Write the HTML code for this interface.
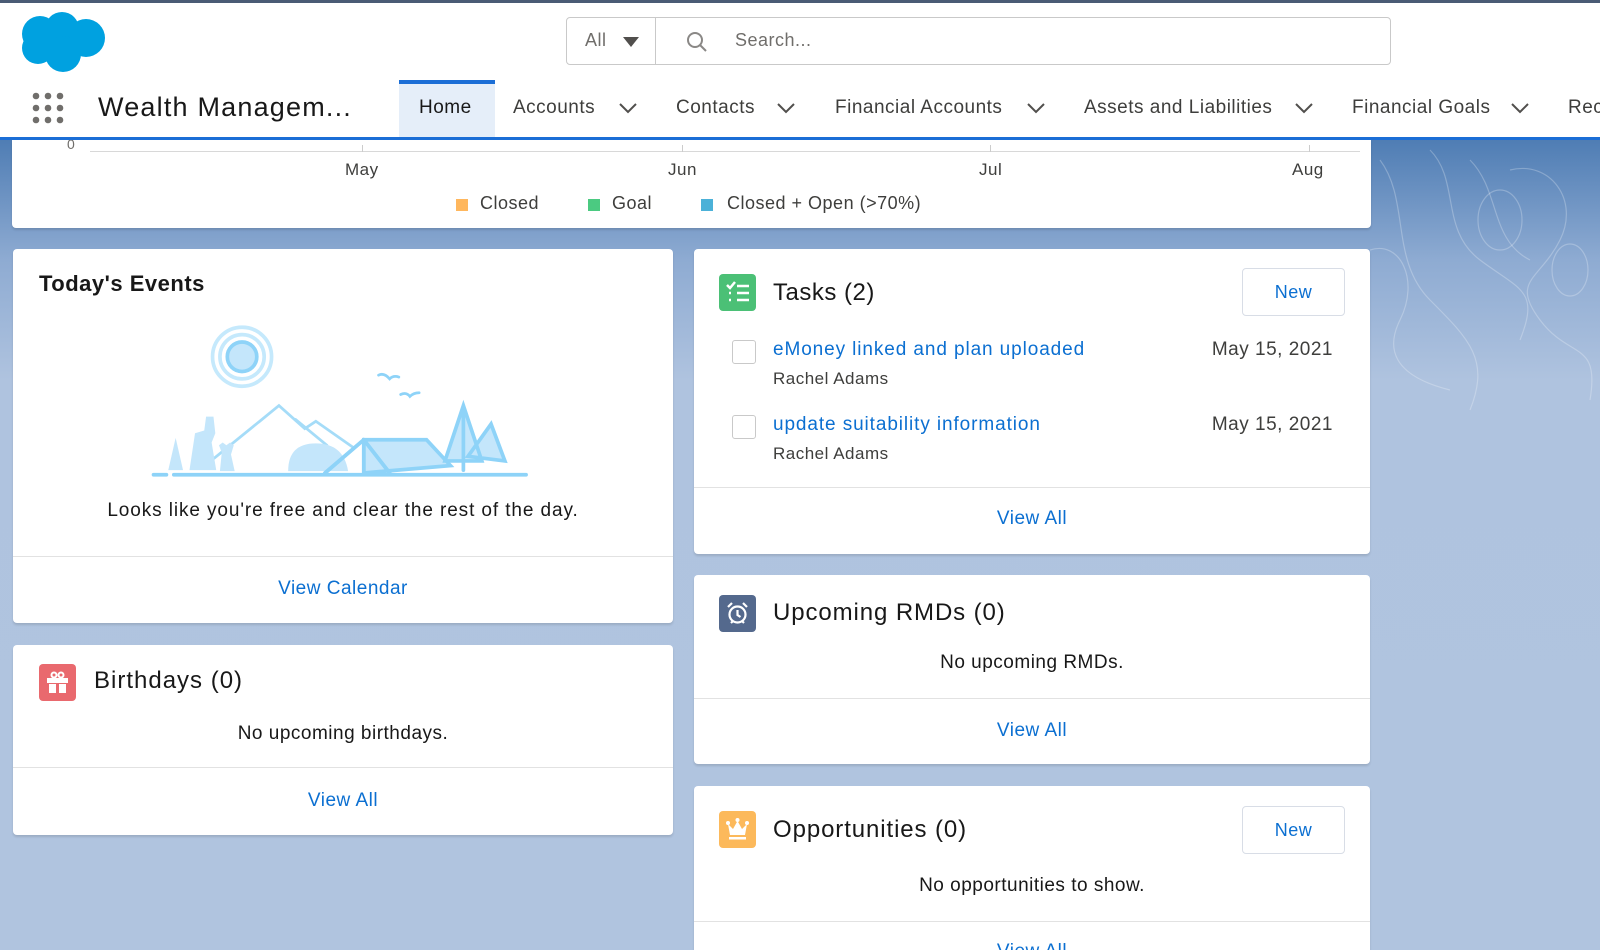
<!DOCTYPE html>
<html style="background:#b0c4df"><head><meta charset="utf-8">
<style>
*{margin:0;padding:0;box-sizing:border-box}
html,body{width:1600px;height:950px;overflow:hidden}
body{position:relative;font-family:"Liberation Sans",sans-serif;color:#181818;letter-spacing:.5px;background:linear-gradient(180deg,#4f7db4 140px,#8eabd2 260px,#afc3df 380px,#b0c4df 100%) no-repeat}
.a{position:absolute;white-space:nowrap}
.card{position:absolute;background:#fff;border-radius:4px;box-shadow:0 2px 2px rgba(0,0,0,.12);overflow:hidden}
.hr{position:absolute;left:0;right:0;height:1px;background:#e2e2e2}
.link{color:#0b6fd1}
.ttl{font-size:24px;color:#181818}
.ctr{position:absolute;left:0;right:0;text-align:center;font-size:19px}
.btn{position:absolute;border:1px solid #d8dde6;border-radius:4px;background:#fff;color:#0b6fd1;font-size:18px;text-align:center}
.ico{position:absolute;width:37px;height:37px;border-radius:4px}
.nav{position:absolute;top:97px;font-size:19px;color:#3e3e3c}
.chev{position:absolute;top:102px}
</style></head><body>
<svg class="a" style="left:1370px;top:140px" width="230" height="280" fill="none" stroke="rgba(255,255,255,.25)" stroke-width="1.2">
<path d="M10 20 C40 60 20 120 60 160 S120 220 100 270"/><path d="M60 10 C90 40 70 90 110 120 S170 150 150 200"/><path d="M140 30 C180 20 210 60 190 100 S140 140 170 180 S230 200 220 260"/><ellipse cx="130" cy="80" rx="22" ry="30"/><ellipse cx="200" cy="130" rx="18" ry="26"/><path d="M0 110 C30 100 50 140 30 180 S40 240 80 250"/><path d="M100 20 C130 50 120 100 160 120"/></svg>
<div class="a" style="left:0;top:0;width:1600px;height:140px;background:#fff;border-top:3px solid #4a5b75;border-bottom:3px solid #1b6ed6"></div>
<svg class="a" style="left:18px;top:10px" width="90" height="64" viewBox="0 0 90 64"><g fill="#00a1e0"><circle cx="22" cy="24" r="18"/><circle cx="44" cy="19" r="17"/><circle cx="68" cy="28" r="19"/><circle cx="45" cy="44" r="18"/><circle cx="20" cy="38" r="16"/></g></svg>
<div class="a" style="left:566px;top:17px;width:825px;height:48px;border:1px solid #c9c9c9;border-radius:4px"></div>
<div class="a" style="left:655px;top:18px;width:1px;height:46px;background:#c9c9c9"></div>
<div class="a" style="left:585px;top:30px;font-size:18px;color:#706e6b">All</div>
<svg class="a" style="left:623px;top:37px" width="16" height="10"><path d="M0 0H16L8 10Z" fill="#514f4d"/></svg>
<svg class="a" style="left:686px;top:31px" width="22" height="22" fill="none" stroke="#8a8886" stroke-width="2"><circle cx="9" cy="9" r="7"/><path d="M14 14L20 20"/></svg>
<div class="a" style="left:735px;top:30px;font-size:18px;color:#706e6b">Search...</div>
<svg class="a" style="left:32px;top:92px" width="34" height="34" fill="#706e6b"><circle cx="4" cy="4" r="3.3"/><circle cx="16" cy="4" r="3.3"/><circle cx="28" cy="4" r="3.3"/><circle cx="4" cy="16" r="3.3"/><circle cx="16" cy="16" r="3.3"/><circle cx="28" cy="16" r="3.3"/><circle cx="4" cy="28" r="3.3"/><circle cx="16" cy="28" r="3.3"/><circle cx="28" cy="28" r="3.3"/></svg>
<div class="a" style="left:98px;top:92px;font-size:27px;color:#181818;letter-spacing:1.2px">Wealth Managem...</div>
<div class="a" style="left:399px;top:80px;width:96px;height:57px;background:#e5eef9;border-top:4px solid #1b6ed6"></div>
<div class="nav" style="left:419px;color:#181818">Home</div>
<div class="nav" style="left:513px">Accounts</div>
<div class="nav" style="left:676px">Contacts</div>
<div class="nav" style="left:835px">Financial Accounts</div>
<div class="nav" style="left:1084px">Assets and Liabilities</div>
<div class="nav" style="left:1352px">Financial Goals</div>
<div class="nav" style="left:1568px">Rec</div>
<svg class="chev" style="left:619px" width="18" height="12" fill="none" stroke="#514f4d" stroke-width="2"><path d="M1 2L9 10L17 2"/></svg>
<svg class="chev" style="left:777px" width="18" height="12" fill="none" stroke="#514f4d" stroke-width="2"><path d="M1 2L9 10L17 2"/></svg>
<svg class="chev" style="left:1027px" width="18" height="12" fill="none" stroke="#514f4d" stroke-width="2"><path d="M1 2L9 10L17 2"/></svg>
<svg class="chev" style="left:1295px" width="18" height="12" fill="none" stroke="#514f4d" stroke-width="2"><path d="M1 2L9 10L17 2"/></svg>
<svg class="chev" style="left:1511px" width="18" height="12" fill="none" stroke="#514f4d" stroke-width="2"><path d="M1 2L9 10L17 2"/></svg>
<div class="card" style="left:12px;top:140px;width:1359px;height:88px;border-radius:0 0 4px 4px">
 <div class="a" style="left:55px;top:-4px;font-size:14px;color:#706e6b">0</div>
 <div class="a" style="left:78px;top:11px;width:1270px;height:1px;background:#d8d8d8"></div>
 <div class="a" style="left:350px;top:5px;width:1px;height:7px;background:#ccc"></div>
 <div class="a" style="left:670px;top:5px;width:1px;height:7px;background:#ccc"></div>
 <div class="a" style="left:978px;top:5px;width:1px;height:7px;background:#ccc"></div>
 <div class="a" style="left:1297px;top:5px;width:1px;height:7px;background:#ccc"></div>
 <div class="a" style="left:333px;top:20px;font-size:17px;color:#3e3e3c">May</div>
 <div class="a" style="left:656px;top:20px;font-size:17px;color:#3e3e3c">Jun</div>
 <div class="a" style="left:967px;top:20px;font-size:17px;color:#3e3e3c">Jul</div>
 <div class="a" style="left:1280px;top:20px;font-size:17px;color:#3e3e3c">Aug</div>
 <div class="a" style="left:444px;top:59px;width:12px;height:12px;background:#ffb75d"></div>
 <div class="a" style="left:468px;top:53px;font-size:18px;color:#3e3e3c">Closed</div>
 <div class="a" style="left:576px;top:59px;width:12px;height:12px;background:#4bca81"></div>
 <div class="a" style="left:600px;top:53px;font-size:18px;color:#3e3e3c">Goal</div>
 <div class="a" style="left:689px;top:59px;width:12px;height:12px;background:#4bb1d8"></div>
 <div class="a" style="left:715px;top:53px;font-size:18px;color:#3e3e3c">Closed + Open (&gt;70%)</div>
</div>
<div class="card" style="left:13px;top:249px;width:660px;height:374px">
 <div class="a" style="left:26px;top:22px;font-size:22px;font-weight:bold">Today's Events</div>
 <svg class="a" style="left:133px;top:69px" width="395" height="166" viewBox="0 0 420 180" fill="none" stroke="#8ed3f8" stroke-width="4" stroke-linecap="round">
  <circle cx="100" cy="42" r="32" stroke="#c5e9fc"/><circle cx="100" cy="42" r="24" stroke="#c5e9fc"/><circle cx="100" cy="42" r="16" fill="#c4e6fb" stroke="#8ed3f8"/>
  <path d="M248 62q6-3 12 4q4-4 10-2M272 83q6-3 10 2q4-4 10-4" stroke-width="3"/>
  <path d="M60 160L140 95L168 120L180 112L220 140M140 95L118 113" stroke="#a5dcf8" stroke-width="3"/>
  <path d="M158 110L192 138" stroke="#a5dcf8" stroke-width="3"/>
  <path d="M20 165l8-35l8 35z" fill="#c4e6fb" stroke="none"/>
  <path d="M43 165l6-40l10-3l2-15h8l2 18l-4 10l5 30z" fill="#c4e6fb" stroke="none"/>
  <path d="M76 166l2-20l-3-8l4-3l4 3l4-3l4 3l-3 10l4 18z" fill="#c4e6fb" stroke="none"/>
  <path d="M150 166q0-30 30-30q30 0 35 30z" fill="#c4e6fb" stroke="none"/>
  <path d="M232 132L190 168M232 132L260 168M232 132L300 132L326 160L232 168z" fill="#c4e6fb"/>
  <path d="M232 132L190 168M232 132L260 168M232 132v36"/>
  <path d="M320 155L340 95L360 155zM340 95v70M345 150L370 115L385 155z" fill="#c4e6fb"/>
  <path d="M4 170h14M26 170h382"/>
 </svg>
 <div class="ctr" style="top:251px;color:#181818;letter-spacing:.9px">Looks like you're free and clear the rest of the day.</div>
 <div class="hr" style="top:307px"></div>
 <div class="ctr link" style="top:329px">View Calendar</div>
</div>
<div class="card" style="left:13px;top:645px;width:660px;height:190px">
 <div class="ico" style="left:26px;top:19px;background:#e9696e"></div>
 <svg class="a" style="left:33px;top:26px" width="23" height="23" fill="#fff"><rect x="1" y="7" width="21" height="5"/><rect x="3" y="13" width="7" height="9"/><rect x="13" y="13" width="7" height="9"/><circle cx="8" cy="4" r="2.5" fill="none" stroke="#fff" stroke-width="2"/><circle cx="15" cy="4" r="2.5" fill="none" stroke="#fff" stroke-width="2"/></svg>
 <div class="a ttl" style="left:81px;top:22px;letter-spacing:1px">Birthdays (0)</div>
 <div class="ctr" style="top:78px">No upcoming birthdays.</div>
 <div class="hr" style="top:122px"></div>
 <div class="ctr link" style="top:145px">View All</div>
</div>
<div class="card" style="left:694px;top:249px;width:676px;height:305px">
 <div class="ico" style="left:25px;top:25px;background:#4bc076"></div>
 <svg class="a" style="left:31px;top:31px" width="26" height="26" fill="none" stroke="#fff" stroke-width="2.5"><path d="M2 5l3 3l5-6M12 6h12M4 13h2M12 13h12M4 20h2M12 20h12"/></svg>
 <div class="a ttl" style="left:79px;top:30px">Tasks (2)</div>
 <div class="btn" style="left:548px;top:19px;width:103px;height:48px;line-height:46px">New</div>
 <div class="a" style="left:38px;top:91px;width:24px;height:24px;border:1px solid #c9c9c9;border-radius:3px"></div>
 <div class="a link" style="left:79px;top:90px;font-size:19px;letter-spacing:.9px">eMoney linked and plan uploaded</div>
 <div class="a" style="left:79px;top:120px;font-size:17px;color:#3e3e3c">Rachel Adams</div>
 <div class="a" style="right:37px;top:90px;font-size:19px;color:#3e3e3c">May 15, 2021</div>
 <div class="a" style="left:38px;top:166px;width:24px;height:24px;border:1px solid #c9c9c9;border-radius:3px"></div>
 <div class="a link" style="left:79px;top:165px;font-size:19px;letter-spacing:.9px">update suitability information</div>
 <div class="a" style="left:79px;top:195px;font-size:17px;color:#3e3e3c">Rachel Adams</div>
 <div class="a" style="right:37px;top:165px;font-size:19px;color:#3e3e3c">May 15, 2021</div>
 <div class="hr" style="top:238px"></div>
 <div class="ctr link" style="top:259px">View All</div>
</div>
<div class="card" style="left:694px;top:575px;width:676px;height:189px">
 <div class="ico" style="left:25px;top:20px;background:#54698d"></div>
 <svg class="a" style="left:31px;top:26px" width="25" height="25" fill="none" stroke="#fff" stroke-width="2.2"><circle cx="12.5" cy="13.5" r="8"/><path d="M12.5 9v5l3 2M3 6l4-4M22 6l-4-4M6 22l2-2M19 22l-2-2"/></svg>
 <div class="a ttl" style="left:79px;top:24px;letter-spacing:.9px">Upcoming RMDs (0)</div>
 <div class="ctr" style="top:77px">No upcoming RMDs.</div>
 <div class="hr" style="top:123px"></div>
 <div class="ctr link" style="top:145px">View All</div>
</div>
<div class="card" style="left:694px;top:786px;width:676px;height:164px;border-radius:4px 4px 0 0">
 <div class="ico" style="left:25px;top:25px;background:#fcb95b"></div>
 <svg class="a" style="left:31px;top:31px" width="25" height="25" fill="#fff"><path d="M3 7l5 5l4.5-8l4.5 8l5-5l-2 11h-15z"/><circle cx="3" cy="6" r="2"/><circle cx="22" cy="6" r="2"/><circle cx="12.5" cy="3" r="2"/><rect x="4" y="20" width="17" height="2.5"/></svg>
 <div class="a ttl" style="left:79px;top:30px;letter-spacing:.9px">Opportunities (0)</div>
 <div class="btn" style="left:548px;top:20px;width:103px;height:48px;line-height:46px">New</div>
 <div class="ctr" style="top:89px">No opportunities to show.</div>
 <div class="hr" style="top:135px"></div>
 <div class="ctr link" style="top:155px">View All</div>
</div>
</body></html>
